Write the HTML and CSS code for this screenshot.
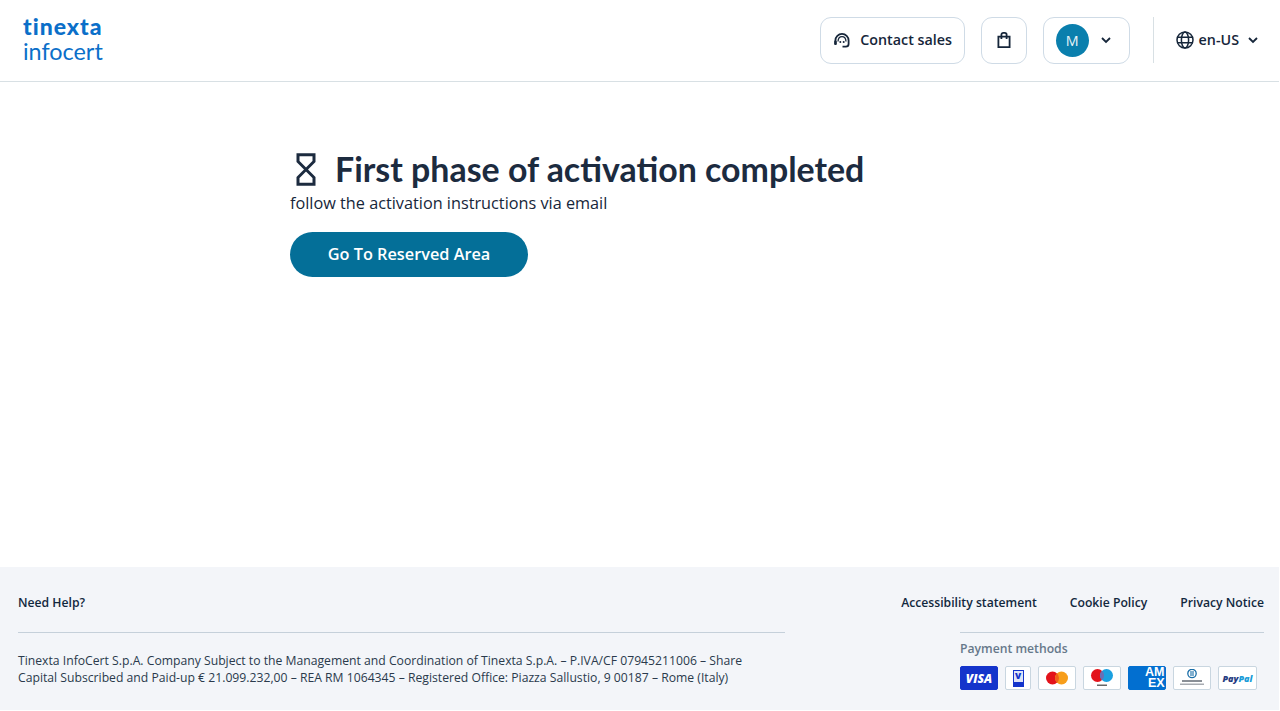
FILE: index.html
```html
<!DOCTYPE html>
<html lang="en">
<head>
<meta charset="utf-8">
<title>First phase of activation completed</title>
<link rel="stylesheet" href="styles.css">
</head>
<body>
<div class="page">
  <header class="topbar">
    <a class="logo" href="#"><span class="logo-top">tinexta</span><span class="logo-bottom">infocert</span></a>
    <div class="actions">
      <button class="btn contact">
        <svg class="ic18" viewBox="0 0 18 18" fill="none" stroke="#16263a" stroke-width="1.8"><path d="M2.400 13.500V9.500a6.600 6.600 0 0 1 13.200 0v3.500c0 1.600-1.200 2.700-2.800 2.700H9.500"/><path d="M5 10.500c.2-3 1.800-4.800 4-4.800s3.800 1.800 4 4.800" stroke-width="1.300"/><rect x="1.200" y="9.600" width="2.600" height="4.400" rx="1.200" fill="#16263a" stroke="none"/><circle cx="7.300" cy="11" r="1" fill="#16263a" stroke="none"/><circle cx="10.700" cy="11" r="1" fill="#16263a" stroke="none"/></svg>
        <span>Contact sales</span>
      </button>
      <button class="btn cart" aria-label="Cart">
        <svg class="ic18" viewBox="0 0 18 18" fill="none" stroke="#16263a" stroke-width="1.800"><path d="M3.400 5.600h11.200v10.600H3.400z"/><path d="M6.400 8V3.800A1.900 1.900 0 0 1 8.300 1.900h1.400a1.900 1.900 0 0 1 1.900 1.900V8"/></svg>
      </button>
      <button class="btn user">
        <span class="avatar">M</span>
        <svg class="chev" viewBox="0 0 12 12" fill="none" stroke="#16263a" stroke-width="1.800"><path d="M2 4l4 4 4-4"/></svg>
      </button>
      <span class="divider"></span>
      <button class="lang">
        <svg class="globe" viewBox="0 0 18 18" fill="none" stroke="#16263a" stroke-width="1.500"><circle cx="9" cy="9" r="8"/><ellipse cx="9" cy="9" rx="3.600" ry="8"/><path d="M1.400 6.300h15.200M1.400 11.700h15.200"/></svg>
        <span>en-US</span>
        <svg class="chev" viewBox="0 0 12 12" fill="none" stroke="#16263a" stroke-width="1.800"><path d="M2 4l4 4 4-4"/></svg>
      </button>
    </div>
  </header>

  <main class="content">
    <div class="panel">
      <h1 class="title">
        <svg class="hourglass" viewBox="0 0 20 33" fill="none" stroke="#1c2b3f" stroke-width="3"><path d="M2 1.700h16v6.800L2 24.500v6.800h16v-6.800L2 8.500z"/></svg>
        <span>First phase of activation completed</span>
      </h1>
      <p class="sub">follow the activation instructions via email</p>
      <button class="cta">Go To Reserved Area</button>
    </div>
  </main>

  <footer class="footer">
    <div class="foot-top">
      <a class="flink" href="#">Need Help?</a>
      <nav class="foot-nav">
        <a class="flink" href="#">Accessibility statement</a>
        <a class="flink" href="#">Cookie Policy</a>
        <a class="flink" href="#">Privacy Notice</a>
      </nav>
    </div>
    <div class="foot-bottom">
      <p class="legal">Tinexta InfoCert S.p.A. Company Subject to the Management and Coordination of Tinexta S.p.A. – P.IVA/CF 07945211006 – Share Capital Subscribed and Paid-up € 21.099.232,00 – REA RM 1064345 – Registered Office: Piazza Sallustio, 9 00187 – Rome (Italy)</p>
      <div class="pay">
        <div class="pay-title">Payment methods</div>
        <div class="cards">
          <span class="card visa">VISA</span>
          <span class="card vpay"><span class="vpay-mark"><span class="vpay-v">V</span><span class="vpay-bar"></span></span></span>
          <span class="card wide">
            <svg class="mark" viewBox="0 0 24 14"><circle cx="7.500" cy="7" r="6.500" fill="#e3131b"/><circle cx="16.500" cy="7" r="6.500" fill="#f79e1b"/><path d="M12 2.300a6.500 6.500 0 0 1 0 9.400 6.500 6.500 0 0 1 0-9.400z" fill="#f0601a"/></svg>
          </span>
          <span class="card wide">
            <svg class="mark-m" viewBox="0 0 24 18"><circle cx="7.500" cy="6.500" r="6.500" fill="#e3131b"/><circle cx="16.500" cy="6.500" r="6.500" fill="#1ba0e0"/><path d="M12 1.800a6.500 6.500 0 0 1 0 9.400 6.500 6.500 0 0 1 0-9.400z" fill="#6a6fb5"/><rect x="7" y="15.500" width="10" height="1.500" fill="#666"/></svg>
          </span>
          <span class="card amex"><span class="amex-t">AM<span class="amex-2">EX</span></span></span>
          <span class="card wide">
            <svg class="mark-d" viewBox="0 0 28 18"><circle cx="14" cy="4.500" r="4.200" fill="none" stroke="#1a6ea8" stroke-width="1.300"/><path d="M13 2v5M15 2v5" stroke="#1a6ea8" stroke-width="1.100"/><rect x="4" y="11" width="20" height="2" fill="#8a8f96"/><rect x="2" y="14.500" width="24" height="1.500" fill="#a8acb2"/></svg>
          </span>
          <span class="card wide paypal"><i class="pp1">Pay</i><i class="pp2">Pal</i></span>
        </div>
      </div>
    </div>
  </footer>
</div>
</body>
</html>
```
FILE: styles.css
```css
* { box-sizing: border-box; }
html, body { margin: 0; padding: 0; height: 100%; }
body { font-family: "Open Sans", "Liberation Sans", sans-serif; color: #16263a; background: #fff; }
button { font-family: inherit; background: none; cursor: pointer; color: inherit; }
a { color: inherit; text-decoration: none; }
p { margin: 0; }

.page { width: 1279px; height: 710px; display: flex; flex-direction: column; }

.topbar { height: 82px; flex: none; display: flex; align-items: center; justify-content: space-between; padding: 0 20px 1px 23px; border-bottom: 1px solid #d8e0e4; }
.logo { display: flex; flex-direction: column; color: #0b6fc9; width: 82px; margin-top: -2px; }
.logo-top { font-family: "Lato", sans-serif; font-weight: 900; font-size: 23px; line-height: 25px; letter-spacing: 1px; }
.logo-bottom { font-family: "Lato", sans-serif; font-size: 23.4px; line-height: 25px; }

.actions { display: flex; align-items: center; }
.btn { height: 47px; border: 1px solid #cfdbe6; border-radius: 11px; display: flex; align-items: center; justify-content: center; padding: 0; color: #16263a; }
.contact { width: 145px; gap: 9px; font-size: 14.3px; font-weight: 600; margin-right: 16px; padding: 0 0 1px 1px; }
.cart { width: 46px; margin-right: 16px; }
.user { width: 87px; gap: 11px; padding-right: 5px; }
.ic18 { width: 18px; height: 18px; flex: none; }
.avatar { width: 33px; height: 33px; border-radius: 50%; background: #0a7fad; color: #e8f4f8; font-size: 14.3px; line-height: 33px; text-align: center; }
.chev { width: 12px; height: 12px; flex: none; }
.divider { width: 1px; height: 46px; background: #d8e0e4; margin: 0 22px 0 23px; }
.lang { border: 0; padding: 0 0 1px; display: flex; align-items: center; gap: 5px; font-size: 14.3px; font-weight: 600; color: #16263a; }
.lang .chev { margin-left: 3px; }
.globe { width: 18px; height: 18px; }

.content { flex: 1; padding: 65px 0 0 290px; }
.panel { display: flex; flex-direction: column; align-items: flex-start; }
.title { margin: 0; display: flex; align-items: center; gap: 19px; font-family: "Lato", sans-serif; font-weight: 700; font-size: 33.9px; line-height: 44px; color: #1c2b3f; padding-left: 6px; }
.hourglass { width: 20px; height: 33px; flex: none; }
.sub { font-size: 16.25px; line-height: 22px; color: #16263a; margin-top: 1px; }
.cta { margin-top: 18px; width: 238px; height: 45px; border: 0; border-radius: 23px; background: #046f98; color: #fff; font-size: 16.3px; font-weight: 600; padding-bottom: 2px; }

.footer { flex: none; height: 143px; background: #f3f5f9; padding: 27px 15px 0 18px; }
.foot-top { display: flex; justify-content: space-between; height: 38px; }
.flink { font-size: 12.2px; font-weight: 600; line-height: 18px; color: #12283e; }
.foot-nav { display: flex; gap: 33px; }
.foot-bottom { display: flex; justify-content: space-between; }
.legal { width: 767px; border-top: 1px solid #c5d0da; padding: 19px 30px 0 0; font-size: 12.2px; line-height: 17px; color: #2a3a4c; }
.pay { width: 304px; border-top: 1px solid #c5d0da; padding-top: 7px; }
.pay-title { font-size: 12.2px; font-weight: 600; line-height: 18px; color: #66788a; }
.cards { display: flex; gap: 7px; margin-top: 8px; }
.card { height: 24px; width: 38px; flex: none; border: 1px solid #c9d6e0; border-radius: 2px; background: #fff; display: flex; align-items: center; justify-content: center; overflow: hidden; }
.visa { background: #1434cb; border-color: #1434cb; color: #fff; font: italic 800 12px "Open Sans", sans-serif; }
.vpay { width: 26px; }
.vpay-mark { width: 11px; height: 17px; border: 1px solid #1434cb; background: #dfe4f7; display: flex; flex-direction: column; align-items: center; justify-content: space-between; }
.vpay-v { font: 800 9px/10px "Open Sans", sans-serif; color: #1434cb; }
.vpay-bar { width: 100%; height: 4px; background: #1434cb; }
.mark { width: 24px; height: 14px; }
.mark-m { width: 24px; height: 18px; }
.mark-d { width: 28px; height: 18px; }
.amex { background: #026fd0; border-color: #026fd0; justify-content: flex-start; }
.amex-t { width: 36px; flex: none; font: 800 12.5px/11px "Liberation Sans", sans-serif; color: #fff; padding-left: 16px; white-space: nowrap; }
.amex-2 { display: block; padding-left: 3px; }
.paypal { width: 39px; font: italic 800 9px "Open Sans", sans-serif; }
.pp1 { color: #253b80; }
.pp2 { color: #179bd7; }
```
